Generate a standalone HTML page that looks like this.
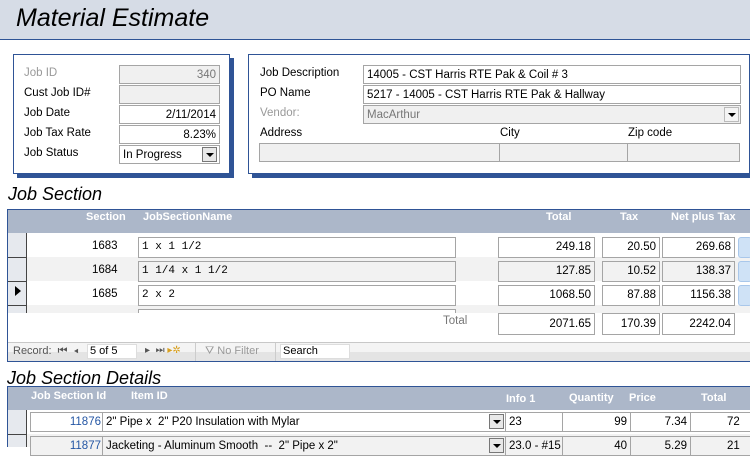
<!DOCTYPE html>
<html><head><style>
*{box-sizing:border-box;margin:0;padding:0}
body{width:750px;height:447px;overflow:hidden;background:#fff;font-family:"Liberation Sans",sans-serif;font-size:11.5px;color:#000;position:relative}
.a{position:absolute;white-space:nowrap}
.in{position:absolute;border:1px solid #a5a5a5;background:#fff;padding:0 3px;line-height:18px;height:19px;overflow:hidden;white-space:nowrap}
.g{background:#f0f0f0}
.r{text-align:right}
.hd{color:#fff;font-weight:bold;font-size:11px}
.dd{position:absolute;width:15px;height:15px;border:1px solid #777;background:#e8e8e8}
.dd:after{content:"";position:absolute;left:3px;top:5px;border-left:4px solid transparent;border-right:4px solid transparent;border-top:4px solid #000}
.mono{font-family:"Liberation Mono",monospace;font-size:11px}
</style></head><body>
<div class="a" style="left:0;top:0;width:750px;height:40px;background:#d6dce6;border-bottom:1px solid #2f5496"></div>
<div class="a" style="left:16px;top:4px;font-size:25px;font-style:italic">Material Estimate</div>

<div class="a" style="left:17px;top:58px;width:217px;height:120px;background:#2f5496"></div>
<div class="a" style="left:13px;top:54px;width:217px;height:120px;border:1px solid #2f5496;background:#fff"></div>
<div class="a" style="left:252px;top:58px;width:498px;height:120px;background:#2f5496"></div>
<div class="a" style="left:248px;top:54px;width:502px;height:120px;border:1px solid #2f5496;background:#fff"></div>

<div class="a" style="left:24px;top:67px;color:#999">Job ID</div>
<div class="a" style="left:24px;top:87px">Cust Job ID#</div>
<div class="a" style="left:24px;top:107px">Job Date</div>
<div class="a" style="left:24px;top:127px">Job Tax Rate</div>
<div class="a" style="left:24px;top:147px">Job Status</div>
<div class="in g r" style="left:119px;top:65px;width:101px;color:#777">340</div>
<div class="in g" style="left:119px;top:85px;width:101px"></div>
<div class="in r" style="left:119px;top:105px;width:101px">2/11/2014</div>
<div class="in r" style="left:119px;top:125px;width:101px">8.23%</div>
<div class="in" style="left:119px;top:145px;width:101px">In Progress</div>
<div class="dd" style="left:202px;top:147px"></div>

<div class="a" style="left:260px;top:67px">Job Description</div>
<div class="a" style="left:260px;top:87px">PO Name</div>
<div class="a" style="left:260px;top:107px;color:#999">Vendor:</div>
<div class="a" style="left:260px;top:127px">Address</div>
<div class="a" style="left:500px;top:127px">City</div>
<div class="a" style="left:628px;top:127px">Zip code</div>
<div class="in" style="left:363px;top:65px;width:378px">14005 - CST Harris RTE Pak &amp; Coil # 3</div>
<div class="in" style="left:363px;top:85px;width:378px">5217 - 14005 - CST Harris RTE Pak &amp; Hallway</div>
<div class="in g" style="left:363px;top:105px;width:378px;color:#777">MacArthur</div>
<div class="dd" style="left:724px;top:107px;border-color:#bbb;background:#f4f4f4"></div>
<div class="in g" style="left:259px;top:143px;width:241px"></div>
<div class="in g" style="left:499px;top:143px;width:129px"></div>
<div class="in g" style="left:627px;top:143px;width:113px"></div>

<div class="a" style="left:8px;top:184px;font-size:18px;font-style:italic">Job Section</div>
<div class="a" style="left:7px;top:209px;width:743px;height:153px;border:1px solid #2f5496;border-right:none"></div>
<div class="a" style="left:8px;top:210px;width:742px;height:23px;background:#acb7c9"></div>
<div class="a hd" style="left:86px;top:211px">Section</div>
<div class="a hd" style="left:143px;top:211px">JobSectionName</div>
<div class="a hd" style="left:546px;top:211px">Total</div>
<div class="a hd" style="left:620px;top:211px">Tax</div>
<div class="a hd" style="left:671px;top:211px">Net plus Tax</div>
<div class="a" style="left:27px;top:257px;width:723px;height:24px;background:#f2f2f2"></div>
<div class="a" style="left:27px;top:305px;width:723px;height:8px;background:#f2f2f2"></div>
<div class="a" style="left:8px;top:233px;width:19px;height:80px;background:#e6e9ee;border-right:1px solid #444"></div>
<div class="a" style="left:8px;top:257px;width:19px;border-top:1px solid #444"></div>
<div class="a" style="left:8px;top:281px;width:19px;border-top:1px solid #444"></div>
<div class="a" style="left:8px;top:305px;width:19px;border-top:1px solid #444"></div>
<div class="a" style="left:15px;top:286px;border-top:5px solid transparent;border-bottom:5px solid transparent;border-left:6px solid #000"></div>

<div class="a" style="left:92px;top:240px">1683</div>
<div class="a" style="left:92px;top:264px">1684</div>
<div class="a" style="left:92px;top:288px">1685</div>
<div class="in mono" style="left:138px;top:237px;width:318px;height:21px;line-height:19px">1 x 1 1/2</div>
<div class="in mono g" style="left:138px;top:261px;width:318px;height:21px;line-height:19px;background:#f2f2f2">1 1/4 x 1 1/2</div>
<div class="in mono" style="left:138px;top:285px;width:318px;height:21px;line-height:19px">2 x 2</div>
<div class="in" style="left:138px;top:309px;width:318px;height:4px;border-bottom:none"></div>

<div class="in r" style="left:498px;top:237px;width:97px;height:21px;line-height:19px">249.18</div>
<div class="in r" style="left:602px;top:237px;width:58px;height:21px;line-height:19px">20.50</div>
<div class="in r" style="left:662px;top:237px;width:73px;height:21px;line-height:19px">269.68</div>
<div class="in r" style="left:498px;top:261px;width:97px;height:21px;line-height:19px;background:#f2f2f2">127.85</div>
<div class="in r" style="left:602px;top:261px;width:58px;height:21px;line-height:19px;background:#f2f2f2">10.52</div>
<div class="in r" style="left:662px;top:261px;width:73px;height:21px;line-height:19px;background:#f2f2f2">138.37</div>
<div class="in r" style="left:498px;top:285px;width:97px;height:21px;line-height:19px">1068.50</div>
<div class="in r" style="left:602px;top:285px;width:58px;height:21px;line-height:19px">87.88</div>
<div class="in r" style="left:662px;top:285px;width:73px;height:21px;line-height:19px">1156.38</div>
<div class="a" style="left:738px;top:237px;width:14px;height:21px;background:#cfe2f6;border:1px solid #a9c7ea;border-radius:3px"></div>
<div class="a" style="left:738px;top:261px;width:14px;height:21px;background:#cfe2f6;border:1px solid #a9c7ea;border-radius:3px"></div>
<div class="a" style="left:738px;top:285px;width:14px;height:21px;background:#cfe2f6;border:1px solid #a9c7ea;border-radius:3px"></div>

<div class="a" style="left:443px;top:315px;color:#777">Total</div>
<div class="in r" style="left:498px;top:313px;width:97px;height:22px;line-height:20px">2071.65</div>
<div class="in r" style="left:602px;top:313px;width:58px;height:22px;line-height:20px">170.39</div>
<div class="in r" style="left:662px;top:313px;width:73px;height:22px;line-height:20px">2242.04</div>

<div class="a" style="left:8px;top:342px;width:742px;height:19px;background:linear-gradient(#f4f4f4 50%,#e4e4e4 50%);border-top:1px solid #c8c8c8"></div>
<div class="a" style="left:13px;top:345px;color:#555;font-size:11px">Record: &nbsp;⏮ &nbsp;◂</div>
<div class="a" style="left:87px;top:344px;width:50px;height:15px;background:#fff;border:1px solid #ddd;font-size:11px;padding-left:2px;line-height:13px">5 of 5</div>
<div class="a" style="left:145px;top:345px;color:#555;font-size:10px">▸ &nbsp;⏭ <span style="color:#d8a020">▸✲</span></div>
<div class="a" style="left:195px;top:343px;height:18px;border-left:1px solid #ccc"></div>
<div class="a" style="left:205px;top:345px;color:#999;font-size:11px">⛛ No Filter</div>
<div class="a" style="left:275px;top:343px;height:18px;border-left:1px solid #ccc"></div>
<div class="a" style="left:280px;top:344px;width:70px;height:15px;background:#fff;border:1px solid #ddd;font-size:11px;padding-left:2px;line-height:13px">Search</div>

<div class="a" style="left:7px;top:368px;font-size:18px;font-style:italic">Job Section Details</div>
<div class="a" style="left:7px;top:386px;width:743px;height:61px;border:1px solid #2f5496;border-right:none;border-bottom:none"></div>
<div class="a" style="left:8px;top:387px;width:742px;height:23px;background:#acb7c9"></div>
<div class="a hd" style="left:31px;top:390px">Job Section Id</div>
<div class="a hd" style="left:131px;top:390px">Item ID</div>
<div class="a hd" style="left:506px;top:393px">Info 1</div>
<div class="a hd" style="left:569px;top:392px">Quantity</div>
<div class="a hd" style="left:629px;top:392px">Price</div>
<div class="a hd" style="left:701px;top:392px">Total</div>
<div class="a" style="left:8px;top:410px;width:19px;height:37px;background:#e6e9ee;border-right:1px solid #444"></div>
<div class="a" style="left:8px;top:434px;width:19px;border-top:1px solid #444"></div>
<div class="a" style="left:27px;top:434px;width:723px;height:13px;background:#f2f2f2"></div>

<div class="in r" style="left:30px;top:412px;width:73px;height:20px;color:#2456a4;padding-right:1px">11876</div>
<div class="in" style="left:102px;top:412px;width:404px;height:20px">2" Pipe x &nbsp;2" P20 Insulation with Mylar</div>
<div class="dd" style="left:489px;top:414px"></div>
<div class="in" style="left:505px;top:412px;width:58px;height:20px">23</div>
<div class="in r" style="left:562px;top:412px;width:69px;height:20px">99</div>
<div class="in r" style="left:630px;top:412px;width:61px;height:20px">7.34</div>
<div class="in" style="left:690px;top:412px;width:62px;height:20px;padding-left:36px">72</div>

<div class="in r" style="left:30px;top:436px;width:73px;height:20px;color:#2456a4;padding-right:1px;background:#f2f2f2">11877</div>
<div class="in" style="left:102px;top:436px;width:404px;height:20px;background:#f2f2f2">Jacketing - Aluminum Smooth &nbsp;-- &nbsp;2" Pipe x 2"</div>
<div class="dd" style="left:489px;top:438px"></div>
<div class="in" style="left:505px;top:436px;width:58px;height:20px;background:#f2f2f2">23.0 - #15</div>
<div class="in r" style="left:562px;top:436px;width:69px;height:20px;background:#f2f2f2">40</div>
<div class="in r" style="left:630px;top:436px;width:61px;height:20px;background:#f2f2f2">5.29</div>
<div class="in" style="left:690px;top:436px;width:62px;height:20px;padding-left:36px;background:#f2f2f2">21</div>
</body></html>
